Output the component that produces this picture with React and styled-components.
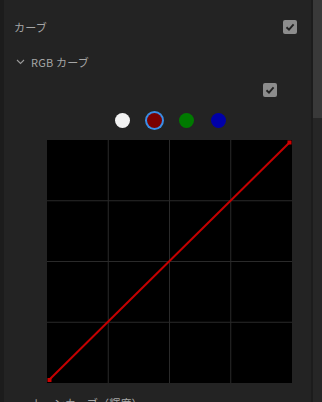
import styled, { createGlobalStyle } from 'styled-components';

const GlobalStyle = createGlobalStyle`
  html, body {
    margin: 0;
    padding: 0;
    background: #1c1c1c;
  }
`;

const Page = styled.div`
  display: flex;
  width: 322px;
  height: 402px;
  overflow: hidden;
  background: #1c1c1c;
  font-family: "Noto Sans CJK JP", "Noto Sans", sans-serif;
`;

const Panel = styled.div`
  width: 307px;
  margin-left: 4px;
  padding-top: 6px;
  background: #232323;
  display: flex;
  flex-direction: column;
`;

const Divider = styled.div`
  height: 1px;
  background: #363636;
`;

const Row = styled.div`
  display: flex;
  align-items: center;
  justify-content: ${p => p.$justify || 'space-between'};
  height: ${p => p.$h}px;
  padding: 0 ${p => p.$right}px 0 ${p => p.$left}px;
  margin-top: ${p => p.$top || 0}px;
`;

const Label = styled.span`
  font-size: 11px;
  color: #a6a6a6;
  letter-spacing: 0.2px;
`;

const Header = styled.div`
  display: flex;
  align-items: center;
  gap: 6px;
`;

const Check = styled.div`
  width: 14px;
  height: 14px;
  border-radius: 2px;
  background: #8c8c8c;
  display: flex;
  align-items: center;
  justify-content: center;
`;

const Dots = styled.div`
  display: flex;
  justify-content: center;
  gap: 17px;
  height: 16px;
  margin-top: 16px;
  padding-left: 25px;
`;

const Dot = styled.div`
  width: 15px;
  height: 15px;
  border-radius: 50%;
  background: ${p => p.$c};
  box-sizing: border-box;
  ${p => p.$active && `box-shadow: 0 0 0 2px #3a8ee6;`}
`;

const Graph = styled.div`
  width: 245px;
  height: 243px;
  margin: 12px 0 0 43px;
  background: #000;
`;

const Scroll = styled.div`
  width: 9px;
  margin-left: 2px;
  background: #262626;
`;

const Thumb = styled.div`
  height: 118px;
  background: #393939;
`;

const CheckMark = () => (
  <Check>
    <svg width="10" height="10" viewBox="0 0 10 10">
      <path d="M1.5 5.2 L4 7.6 L8.6 2.4" fill="none" stroke="#222" strokeWidth="1.9" />
    </svg>
  </Check>
);

const Chevron = () => (
  <svg width="9" height="6" viewBox="0 0 9 6">
    <path d="M1 1 L4.5 4.5 L8 1" fill="none" stroke="#9a9a9a" strokeWidth="1.1" />
  </svg>
);

const Curve = () => (
  <svg width="245" height="243" viewBox="0 0 245 243" style={{ display: 'block' }}>
    {[61.25, 122.5, 183.75].map(x => (
      <line key={'v' + x} x1={x} y1="0" x2={x} y2="243" stroke="#2a2a2a" strokeWidth="1" />
    ))}
    {[60.75, 121.5, 182.25].map(y => (
      <line key={'h' + y} x1="0" y1={y} x2="245" y2={y} stroke="#2a2a2a" strokeWidth="1" />
    ))}
    <line x1="2" y1="240" x2="243" y2="2" stroke="#c40000" strokeWidth="2" />
    <rect x="0.5" y="238" width="4" height="4" fill="#d00000" />
    <rect x="240.5" y="0.5" width="4" height="4" fill="#d00000" />
  </svg>
);

export default function App() {
  return (
    <Page>
      <GlobalStyle />
      <Panel>
        <Divider />
        <Row $h={22} $left={10} $right={14} $top={13}>
          <Label>カーブ</Label>
          <CheckMark />
        </Row>
        <Row $h={20} $left={12} $right={14} $top={19}>
          <Header>
            <Chevron />
            <Label>RGB カーブ</Label>
          </Header>
        </Row>
        <Row $h={14} $left={10} $right={34} $top={13} $justify="flex-end">
          <CheckMark />
        </Row>
        <Dots>
          <Dot $c="#f2f2f2" />
          <Dot $c="#7a0000" $active />
          <Dot $c="#007a00" />
          <Dot $c="#0000a8" />
        </Dots>
        <Graph>
          <Curve />
        </Graph>
        <Row $h={20} $left={28} $right={14} $top={12}>
          <Header>
            <Label>トーンカーブ（輝度）</Label>
          </Header>
        </Row>
      </Panel>
      <Scroll>
        <Thumb />
      </Scroll>
    </Page>
  );
}
